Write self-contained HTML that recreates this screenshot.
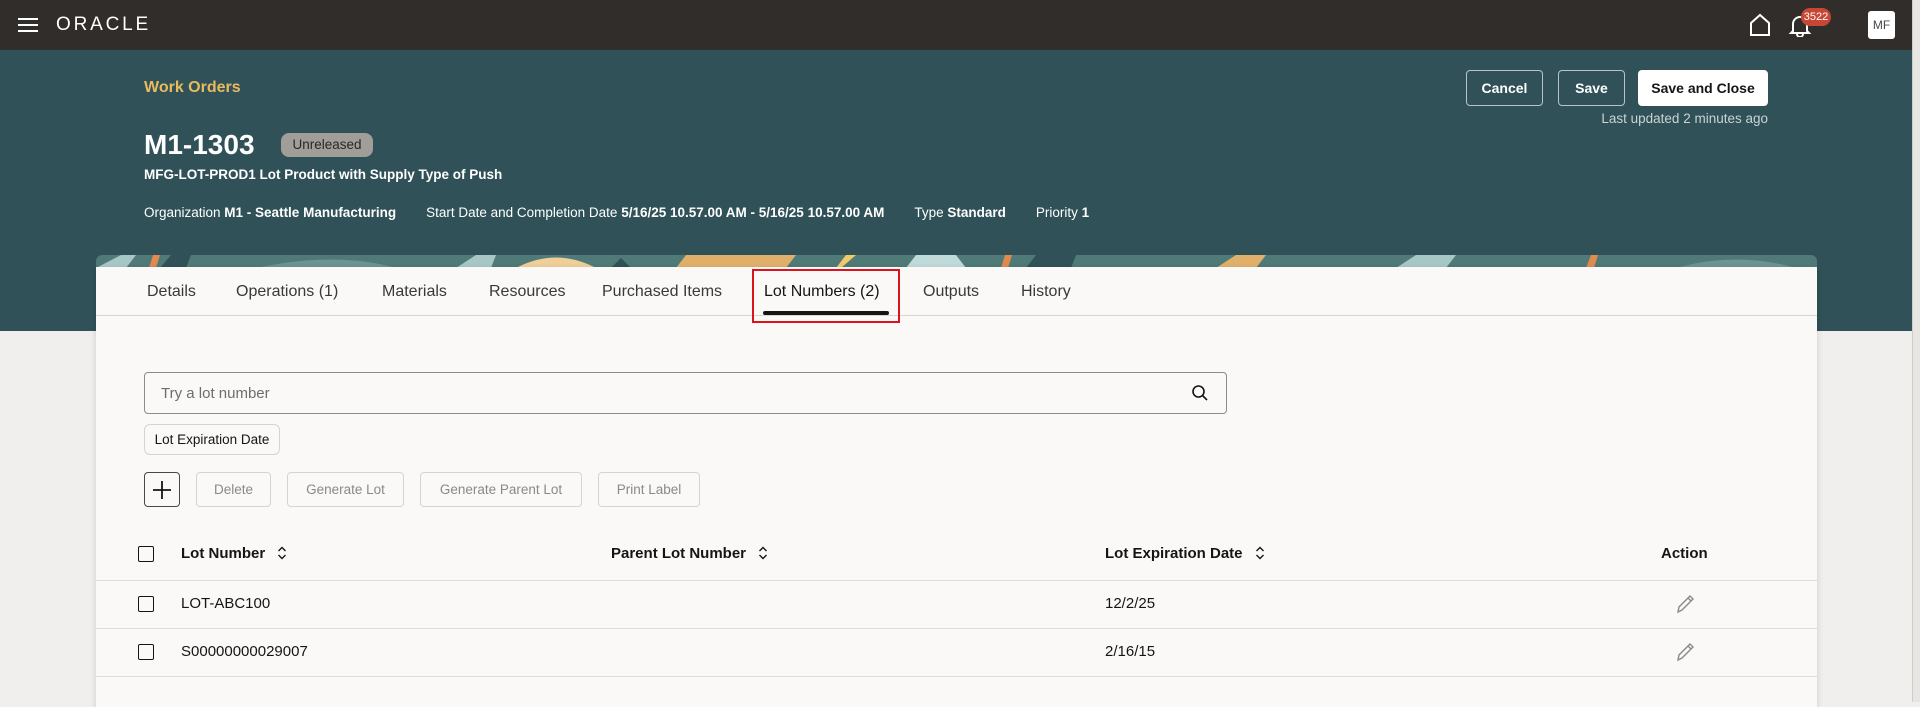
<!DOCTYPE html>
<html><head><meta charset="utf-8"><style>
*{box-sizing:border-box;margin:0;padding:0}
body{width:1920px;height:702px;overflow:hidden;font-family:"Liberation Sans",sans-serif;color:#161513;background:#f1efed;position:relative}
.abs{position:absolute;white-space:nowrap}
#hdr{position:absolute;left:0;top:0;width:1920px;height:50px;background:#312d2a}
#teal{position:absolute;left:0;top:50px;width:1920px;height:281px;background:#2f5157}
#scroll{position:absolute;left:1912px;top:0;width:8px;height:702px;background:#e8e6e3;border-left:1px solid #cfcdca}
#card{position:absolute;left:96px;top:267px;width:1721px;height:440px;background:#faf9f8;box-shadow:0 2px 6px rgba(0,0,0,.15)}
#strip{position:absolute;left:96px;top:255px;width:1721px;height:12px;border-radius:6px 6px 0 0;overflow:hidden;background:#4f7a77}
.btn{position:absolute;border:1px solid #b8c5c6;border-radius:4px;color:#fff;font-weight:bold;font-size:14px;display:flex;align-items:center;justify-content:center}
.tab{position:absolute;top:283px;font-size:16px;color:#3b3835}
.gb{position:absolute;top:472px;height:35px;border:1px solid #d6d4d1;border-radius:4px;font-size:13.5px;color:#8b8985;display:flex;align-items:center;justify-content:center}
.cb{position:absolute;left:138px;width:16px;height:16px;border:1.5px solid #161513;border-radius:2px}
.th{position:absolute;top:545px;font-size:15px;font-weight:bold}
.td{position:absolute;font-size:15px}
.line{position:absolute;left:96px;width:1721px;height:1px;background:#dedcd9}
.sort{display:inline-block;vertical-align:middle;margin-left:12px;margin-top:-3px}
</style></head><body>
<div id="hdr"></div>
<svg class="abs" style="left:18px;top:17px" width="22" height="16"><path d="M0 2H20M0 8H20M0 14H20" stroke="#fff" stroke-width="2"/></svg>
<div class="abs" style="left:56px;top:14px;color:#fff;font-size:19px;letter-spacing:2.8px">ORACLE</div>
<svg class="abs" style="left:1748px;top:13px" width="24" height="24"><path d="M3 22V10L12 2L21 10V22Z" fill="none" stroke="#fff" stroke-width="2"/></svg>
<svg class="abs" style="left:1788px;top:13px" width="24" height="24"><path d="M5 18V11a7 7 0 0 1 14 0v7l2 2H3z M9 21a3 3 0 0 0 6 0" fill="none" stroke="#fff" stroke-width="2"/></svg>
<div class="abs" style="left:1801px;top:8px;width:30px;height:18px;background:#c74634;border-radius:9px;color:#fff;font-size:11px;text-align:center;line-height:18px">3522</div>
<div class="abs" style="left:1868px;top:11px;width:27px;height:28px;background:#fff;border-radius:3px;color:#4a4845;font-size:12px;text-align:center;line-height:28px">MF</div>
<div id="teal"></div>
<div class="abs" style="left:144px;top:79px;color:#e8bb5f;font-size:16px;font-weight:bold">Work Orders</div>
<div class="abs" style="left:144px;top:129px;color:#fff;font-size:28px;font-weight:bold">M1-1303</div>
<div class="abs" style="left:281px;top:133px;width:92px;height:24px;background:#a19d98;border-radius:8px;color:#2a2725;font-size:13.5px;text-align:center;line-height:24px">Unreleased</div>
<div class="abs" style="left:144px;top:167px;color:#fff;font-size:13.5px;font-weight:bold">MFG-LOT-PROD1 Lot Product with Supply Type of Push</div>
<div class="abs" style="left:144px;top:205px;color:#fff;font-size:13.5px">Organization <b>M1 - Seattle Manufacturing</b><span style="margin-left:30px">Start Date and Completion Date <b>5/16/25 10.57.00 AM - 5/16/25 10.57.00 AM</b></span><span style="margin-left:30px">Type <b>Standard</b></span><span style="margin-left:30px">Priority <b>1</b></span></div>
<div class="btn" style="left:1466px;top:70px;width:77px;height:36px">Cancel</div>
<div class="btn" style="left:1558px;top:70px;width:67px;height:36px">Save</div>
<div class="btn" style="left:1638px;top:70px;width:130px;height:36px;background:#fff;color:#161513;border-color:#fff">Save and Close</div>
<div class="abs" style="right:152px;top:111px;color:#c9d3d4;font-size:13.5px">Last updated 2 minutes ago</div>
<div id="strip"><svg width="1721" height="13">
<path d="M0 13L25 0H40L30 13Z" fill="#a7c7c6"/><path d="M53 13L57 0H64L60 13Z" fill="#e08a4f"/><path d="M64 13L75 0H95L90 13Z" fill="#2f5157"/>
<path d="M160 13Q240 -4 300 13Z" fill="#6d9492"/><path d="M360 13L380 0H400L395 13Z" fill="#a7c7c6"/>
<path d="M420 13Q460 -8 500 13Z" fill="#efcf98"/><path d="M515 13L525 3L535 13Z" fill="#2f5157"/>
<path d="M580 13L590 0H700L690 13Z" fill="#e0b06b"/><path d="M740 13L750 0H760L745 13Z" fill="#f0c96a"/>
<path d="M810 13L820 0H860L870 13Z" fill="#c0d9d9"/><path d="M905 13L909 0H916L912 13Z" fill="#e08a4f"/><path d="M930 13L940 0H980L975 13Z" fill="#2f5157"/>
<path d="M1120 13L1140 0H1170L1160 13Z" fill="#e0b06b"/><path d="M1300 13L1320 0H1360L1350 13Z" fill="#a7c7c6"/><path d="M1490 13L1495 0H1502L1498 13Z" fill="#e08a4f"/><path d="M1580 13Q1640 -4 1700 13Z" fill="#6d9492"/>
</svg></div>
<div id="card"></div>
<div class="line" style="top:315px;background:#d8d6d3"></div>
<div class="tab" style="left:147px">Details</div>
<div class="tab" style="left:236px">Operations (1)</div>
<div class="tab" style="left:382px">Materials</div>
<div class="tab" style="left:489px">Resources</div>
<div class="tab" style="left:602px">Purchased Items</div>
<div class="tab" style="left:764px;color:#161513">Lot Numbers (2)</div>
<div class="tab" style="left:923px">Outputs</div>
<div class="tab" style="left:1021px">History</div>
<div class="abs" style="left:763px;top:311px;width:126px;height:4px;background:#161513;border-radius:2px"></div>
<div class="abs" style="left:752px;top:269px;width:148px;height:54px;border:2px solid #d9141c"></div>
<div class="abs" style="left:144px;top:372px;width:1083px;height:42px;border:1px solid #8e8b88;border-radius:4px"></div>
<div class="abs" style="left:161px;top:385px;font-size:15px;color:#6f6c69">Try a lot number</div>
<svg class="abs" style="left:1191px;top:384px" width="18" height="18"><circle cx="7.5" cy="7.5" r="5.5" fill="none" stroke="#161513" stroke-width="1.6"/><path d="M11.5 11.5L16 16" stroke="#161513" stroke-width="1.6"/></svg>
<div class="abs" style="left:144px;top:424px;width:136px;height:31px;border:1px solid #d6d4d1;border-radius:6px;font-size:13.5px;text-align:center;line-height:29px">Lot Expiration Date</div>
<div class="abs" style="left:144px;top:472px;width:36px;height:35px;border:1px solid #4a4845;border-radius:4px"></div>
<svg class="abs" style="left:152px;top:480px" width="20" height="20"><path d="M10 1V19M1 10H19" stroke="#161513" stroke-width="1.8"/></svg>
<div class="gb" style="left:196px;width:75px">Delete</div>
<div class="gb" style="left:287px;width:117px">Generate Lot</div>
<div class="gb" style="left:420px;width:162px">Generate Parent Lot</div>
<div class="gb" style="left:598px;width:102px">Print Label</div>
<div class="cb" style="top:546px"></div>
<div class="th" style="left:181px">Lot Number<svg class="sort" width="10" height="16"><path d="M1.5 6L5 2.5L8.5 6M1.5 10L5 13.5L8.5 10" fill="none" stroke="#161513" stroke-width="1.4"/></svg></div>
<div class="th" style="left:611px">Parent Lot Number<svg class="sort" width="10" height="16"><path d="M1.5 6L5 2.5L8.5 6M1.5 10L5 13.5L8.5 10" fill="none" stroke="#161513" stroke-width="1.4"/></svg></div>
<div class="th" style="left:1105px">Lot Expiration Date<svg class="sort" width="10" height="16"><path d="M1.5 6L5 2.5L8.5 6M1.5 10L5 13.5L8.5 10" fill="none" stroke="#161513" stroke-width="1.4"/></svg></div>
<div class="th" style="left:1661px">Action</div>
<div class="line" style="top:580px"></div>
<div class="cb" style="top:596px"></div>
<div class="td" style="left:181px;top:595px">LOT-ABC100</div>
<div class="td" style="left:1105px;top:595px">12/2/25</div>
<svg class="abs" style="left:1675px;top:593px" width="22" height="22"><path d="M3 19L4 14L15 3L18 6L7 17Z M13 5L16 8" fill="none" stroke="#8b8985" stroke-width="1.4"/></svg>
<div class="line" style="top:628px"></div>
<div class="cb" style="top:644px"></div>
<div class="td" style="left:181px;top:643px">S00000000029007</div>
<div class="td" style="left:1105px;top:643px">2/16/15</div>
<svg class="abs" style="left:1675px;top:641px" width="22" height="22"><path d="M3 19L4 14L15 3L18 6L7 17Z M13 5L16 8" fill="none" stroke="#8b8985" stroke-width="1.4"/></svg>
<div class="line" style="top:676px"></div>
<div id="scroll"></div>
</body></html>
